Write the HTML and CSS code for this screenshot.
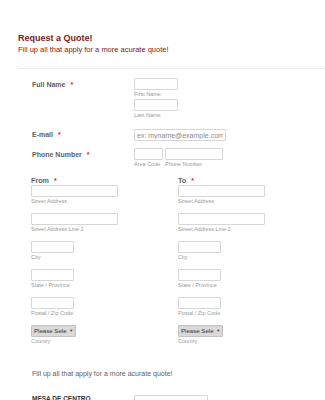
FILE: index.html
```html
<!DOCTYPE html>
<html lang="en">
<head>
  <meta charset="UTF-8" />
  <meta name="viewport" content="width=device-width, initial-scale=1" />
  <title>Request a Quote!</title>
  <link rel="stylesheet" href="styles.css">
</head>
<body>
  <div class="form">
    <div class="header">
      <h1>Request a Quote!</h1>
      <p>Fill up all that apply for a more acurate quote!</p>
    </div>

    <div class="row row-name">
      <div class="label">Full Name <span class="req">*</span></div>
      <div class="field">
        <div class="group">
          <input class="box w44" type="text">
          <span class="sub">First Name</span>
        </div>
        <div class="group">
          <input class="box w44" type="text">
          <span class="sub">Last Name</span>
        </div>
      </div>
    </div>

    <div class="row row-email">
      <div class="label">E-mail <span class="req">*</span></div>
      <div class="field">
        <input class="box w92 ph" type="text" placeholder="ex: myname@example.com">
      </div>
    </div>

    <div class="row row-phone">
      <div class="label">Phone Number <span class="req">*</span></div>
      <div class="field phone">
        <div class="group">
          <input class="box w29" type="text">
          <span class="sub">Area Code</span>
        </div>
        <div class="group">
          <input class="box w58" type="text">
          <span class="sub">Phone Number</span>
        </div>
      </div>
    </div>

    <div class="address">
      <div class="col">
        <div class="col-label">From <span class="req">*</span></div>
        <div class="group"><input class="box w87" type="text"><span class="sub">Street Address</span></div>
        <div class="group"><input class="box w87" type="text"><span class="sub">Street Address Line 2</span></div>
        <div class="group"><input class="box w43" type="text"><span class="sub">City</span></div>
        <div class="group"><input class="box w43" type="text"><span class="sub">State / Province</span></div>
        <div class="group"><input class="box w43" type="text"><span class="sub">Postal / Zip Code</span></div>
        <div class="group"><div class="select">Please Sele <span class="arrow">▼</span></div><span class="sub">Country</span></div>
      </div>
      <div class="col">
        <div class="col-label">To <span class="req">*</span></div>
        <div class="group"><input class="box w87" type="text"><span class="sub">Street Address</span></div>
        <div class="group"><input class="box w87" type="text"><span class="sub">Street Address Line 2</span></div>
        <div class="group"><input class="box w43" type="text"><span class="sub">City</span></div>
        <div class="group"><input class="box w43" type="text"><span class="sub">State / Province</span></div>
        <div class="group"><input class="box w43" type="text"><span class="sub">Postal / Zip Code</span></div>
        <div class="group"><div class="select">Please Sele <span class="arrow">▼</span></div><span class="sub">Country</span></div>
      </div>
    </div>

    <p class="note">Fill up all that apply for a more acurate quote!</p>

    <div class="row row-mesa">
      <div class="label dark">MESA DE CENTRO</div>
      <div class="field">
        <input class="box w74" type="text">
      </div>
    </div>
  </div>
</body>
</html>
```

FILE: styles.css
```css
* {
  box-sizing: border-box;
}

body {
  margin: 0;
  font-family: "Liberation Sans", Arial, sans-serif;
  background: #fff;
  color: #555;
  overflow: hidden;
}

.form {
  width: 325px;
}

.header {
  margin-left: 18px;
  padding: 33px 0 13px;
  border-bottom: 1px solid #ebebeb;
}

.header h1 {
  margin: 0;
  font-size: 9px;
  line-height: 11px;
  font-weight: bold;
  color: #7b1b22;
}

.header p {
  margin: 1px 0 0;
  font-size: 7.5px;
  line-height: 10px;
  color: #7b1b22;
}

.row {
  display: flex;
  padding-left: 32px;
}

.label {
  width: 102px;
  font-size: 7px;
  font-weight: bold;
  color: #616161;
  line-height: 11px;
  padding-top: 1px;
}

.req {
  color: #e02424;
  margin-left: 3px;
}

.field {
  display: flex;
  flex-direction: column;
}

.field.phone {
  flex-direction: row;
  gap: 2px;
}

.group {
  display: flex;
  flex-direction: column;
}

.box {
  display: block;
  height: 12px;
  margin: 0;
  padding: 0 2px;
  border: 1px solid #d6d6d6;
  border-radius: 1px;
  background: #fff;
  font-family: inherit;
  font-size: 7px;
  outline: none;
}

.box.ph::placeholder {
  color: #8a8a8a;
}

.w29 { width: 29px; }
.w43 { width: 43px; }
.w44 { width: 44px; }
.w58 { width: 58px; }
.w74 { width: 74px; }
.w87 { width: 87px; }
.w92 { width: 92px; }

.sub {
  font-size: 5.5px;
  line-height: 9px;
  color: #9a9a9a;
}

.row-name {
  margin-top: 9px;
}

.row-email {
  margin-top: 9px;
}

.row-email .label {
  padding-top: 0;
}

.row-phone {
  margin-top: 7px;
}

.address {
  display: flex;
  padding-left: 31px;
  margin-top: 8px;
}

.col {
  width: 150px;
  display: flex;
  flex-direction: column;
}

.col-label {
  font-size: 7.2px;
  font-weight: bold;
  line-height: 8px;
  color: #616161;
}

.col .group {
  margin-bottom: 7px;
}

.select {
  width: 45px;
  height: 12px;
  background: #d9d9d9;
  border: 1px solid #c2c2c2;
  border-radius: 1px;
  font-size: 6.1px;
  line-height: 10px;
  color: #333;
  padding-left: 2px;
  white-space: nowrap;
  overflow: hidden;
}

.arrow {
  color: #8a1a1a;
  font-size: 4px;
  vertical-align: 1px;
  margin-left: 1px;
}

.note {
  margin: 16px 0 0 32px;
  font-size: 7px;
  line-height: 10px;
  color: #616161;
}

.row-mesa {
  margin-top: 16px;
}

.label.dark {
  color: #333;
  font-size: 6.5px;
  line-height: 8px;
  padding-top: 0;
}
```
